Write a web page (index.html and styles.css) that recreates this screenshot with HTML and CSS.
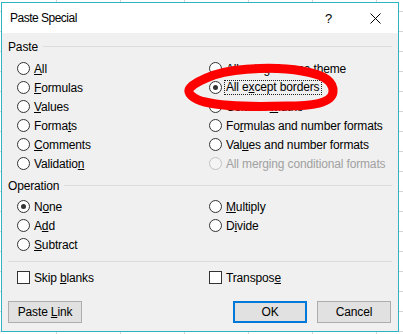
FILE: index.html
```html
<html><head>
    <title>Paste Special</title>
    <link rel="stylesheet" href="styles.css">
</head>
<body>

<div id="dialog">
    <div class="titlebar">
        <span class="title">Paste Special</span>
        <span class="help">?</span>
        <span class="close">
            <svg width="11" height="11" viewBox="0 0 11 11"><path d="M0.5 0.5 L10.5 10.5 M10.5 0.5 L0.5 10.5" stroke="#000" stroke-width="1" fill="none"/></svg>
        </span>
    </div>
    <div class="content">
        <div class="group-head"><span>Paste</span><div class="rule"></div></div>
        <div class="options paste-opts">
            <div class="opt"><span class="radio"></span><span><u>A</u>ll</span></div>
            <div class="opt"><span class="radio"></span><span>All using Source t<u>h</u>eme</span></div>
            <div class="opt"><span class="radio"></span><span><u>F</u>ormulas</span></div>
            <div class="opt"><span class="radio on"></span><span class="focus">All e<u>x</u>cept borders</span></div>
            <div class="opt"><span class="radio"></span><span><u>V</u>alues</span></div>
            <div class="opt"><span class="radio"></span><span>Column <u>w</u>idths</span></div>
            <div class="opt"><span class="radio"></span><span>Forma<u>t</u>s</span></div>
            <div class="opt"><span class="radio"></span><span>Fo<u>r</u>mulas and number formats</span></div>
            <div class="opt"><span class="radio"></span><span><u>C</u>omments</span></div>
            <div class="opt"><span class="radio"></span><span>Val<u>u</u>es and number formats</span></div>
            <div class="opt"><span class="radio"></span><span>Validatio<u>n</u></span></div>
            <div class="opt disabled"><span class="radio"></span><span>All merging conditional formats</span></div>
        </div>

        <div class="group-head op-head"><span>Operation</span><div class="rule"></div></div>
        <div class="options op-opts">
            <div class="opt"><span class="radio on"></span><span>N<u>o</u>ne</span></div>
            <div class="opt"><span class="radio"></span><span><u>M</u>ultiply</span></div>
            <div class="opt"><span class="radio"></span><span>A<u>d</u>d</span></div>
            <div class="opt"><span class="radio"></span><span>D<u>i</u>vide</span></div>
            <div class="opt"><span class="radio"></span><span><u>S</u>ubtract</span></div>
            <div class="opt"></div>
        </div>

        <div class="separator"></div>
        <div class="options check-opts">
            <div class="opt"><span class="check"></span><span>Skip <u>b</u>lanks</span></div>
            <div class="opt"><span class="check"></span><span>Transpos<u>e</u></span></div>
        </div>

        <div class="buttons">
            <button class="btn">Paste <u>L</u>ink</button>
            <div class="spacer"></div>
            <button class="btn default">OK</button>
            <button class="btn">Cancel</button>
        </div>
    </div>
</div>

<svg class="scribble" width="403" height="334" viewBox="0 0 403 334">
    <path d="M214 75 C240 67 280 67 302 71 C321 74 334 80 333 92 C332 103 312 106 286 106 C256 107 226 107 205 102 C193 99 186 93 190 88 C194 83 203 79 214 75"
          stroke="#ff0000" stroke-width="9" fill="none" stroke-linecap="round" stroke-linejoin="round"/>
</svg>

</body></html>
```

FILE: styles.css
```css
body {
    margin: 0;
    padding: 0;
    width: 403px;
    height: 334px;
    overflow: hidden;
    position: relative;
    background-color: #fff;
    background-image:
        linear-gradient(#d4d4d4 1px, transparent 1px),
        linear-gradient(90deg, #d4d4d4 1px, transparent 1px);
    background-size: 100% 20px, 64px 100%;
    background-position: 0 11px, 56px 0;
    font-family: "Liberation Sans", Arial, sans-serif;
    font-size: 12px;
    color: #000;
}
#dialog {
    box-sizing: border-box;
    width: 398px;
    height: 330px;
    margin: 2px 0 0 1px;
    border: 1px solid #2fb3c3;
    background-color: #f0f0f0;
    display: flex;
    flex-direction: column;
}
.titlebar {
    height: 30px;
    background-color: #fff;
    display: flex;
    align-items: center;
}
.title {
    margin-left: 8px;
    letter-spacing: -0.5px;
    flex: 1;
}
.help {
    width: 8px;
    margin-right: 37px;
    font-size: 13px;
}
.close {
    display: flex;
    margin-right: 17px;
}
.content {
    flex: 1;
    padding: 0 6px;
    letter-spacing: -0.15px;
}
.group-head {
    display: flex;
    align-items: center;
    height: 14px;
    margin-top: 7px;
    gap: 5px;
}
.rule {
    flex: 1;
    height: 1px;
    margin-top: -1px;
    background-color: #dcdcdc;
}
.options {
    display: grid;
    grid-template-columns: 192px 1fr;
    grid-auto-rows: 19px;
    padding-left: 9px;
}
.paste-opts {
    margin-top: 5px;
}
.op-head {
    margin-top: 6px;
}
.op-opts {
    margin-top: 4px;
}
.opt {
    display: flex;
    align-items: center;
    white-space: nowrap;
}
.radio, .check {
    box-sizing: border-box;
    width: 13px;
    height: 13px;
    margin-right: 4px;
    border: 1px solid #333;
    background-color: #fff;
    flex-shrink: 0;
}
.radio {
    border-radius: 50%;
    display: flex;
    align-items: center;
    justify-content: center;
}
.radio.on::after {
    content: "";
    width: 5px;
    height: 5px;
    border-radius: 50%;
    background-color: #333;
}
.disabled {
    color: #a0a0a0;
}
.disabled .radio {
    border-color: #c2c2c2;
    background-color: #f4f4f4;
}
.focus {
    border: 1px dotted #222;
    padding: 0 2px 0 1px;
    margin-left: -2px;
    line-height: 13px;
}
.separator {
    height: 1px;
    margin-top: 7px;
    background-color: #dcdcdc;
}
.check-opts {
    margin-top: 6px;
}
.buttons {
    display: flex;
    margin-top: 14px;
    padding-right: 1px;
}
.spacer {
    flex: 1;
}
.btn {
    box-sizing: border-box;
    width: 74px;
    height: 22px;
    padding: 0;
    border: 1px solid #adadad;
    background-color: #e1e1e1;
    font-family: "Liberation Sans", Arial, sans-serif;
    font-size: 12px;
    letter-spacing: -0.15px;
    color: #000;
}
.btn.default {
    border: 2px solid #0078d7;
    margin-right: 10px;
}
.scribble {
    position: absolute;
    left: 0;
    top: 0;
    pointer-events: none;
}
```
